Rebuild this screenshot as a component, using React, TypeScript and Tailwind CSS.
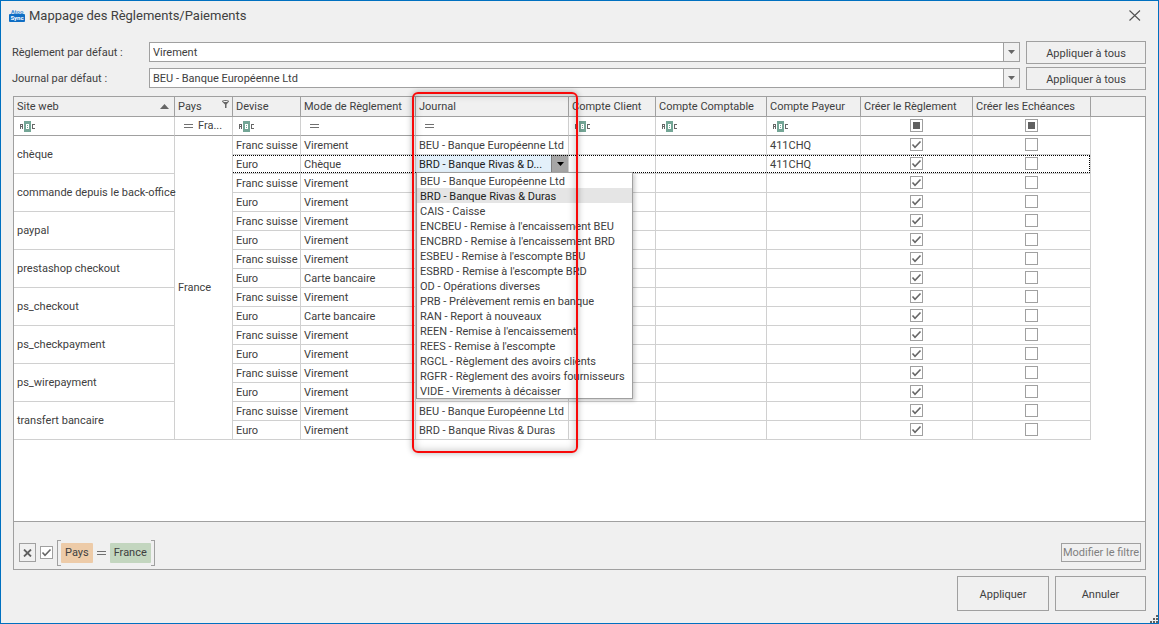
import type { ReactNode } from "react";

type Row = { devise: string; mode: string; journal?: string; payeur?: string };

const JOURNAUX = [
  "BEU - Banque Européenne Ltd",
  "BRD - Banque Rivas & Duras",
  "CAIS - Caisse",
  "ENCBEU - Remise à l'encaissement BEU",
  "ENCBRD - Remise à l'encaissement BRD",
  "ESBEU - Remise à l'escompte BEU",
  "ESBRD - Remise à l'escompte BRD",
  "OD - Opérations diverses",
  "PRB - Prélèvement remis en banque",
  "RAN - Report à nouveaux",
  "REEN - Remise à l'encaissement",
  "REES - Remise à l'escompte",
  "RGCL - Règlement des avoirs clients",
  "RGFR - Règlement des avoirs fournisseurs",
  "VIDE - Virements à décaisser",
];

const FRANC = "Franc suisse";
const EURO = "Euro";

const SITES: { name: string; rows: Row[] }[] = [
  {
    name: "chèque",
    rows: [
      { devise: FRANC, mode: "Virement", journal: JOURNAUX[0], payeur: "411CHQ" },
      { devise: EURO, mode: "Chèque", journal: JOURNAUX[1], payeur: "411CHQ" },
    ],
  },
  {
    name: "commande depuis le back-office",
    rows: [{ devise: FRANC, mode: "Virement" }, { devise: EURO, mode: "Virement" }],
  },
  { name: "paypal", rows: [{ devise: FRANC, mode: "Virement" }, { devise: EURO, mode: "Virement" }] },
  {
    name: "prestashop checkout",
    rows: [{ devise: FRANC, mode: "Virement" }, { devise: EURO, mode: "Carte bancaire" }],
  },
  { name: "ps_checkout", rows: [{ devise: FRANC, mode: "Virement" }, { devise: EURO, mode: "Carte bancaire" }] },
  { name: "ps_checkpayment", rows: [{ devise: FRANC, mode: "Virement" }, { devise: EURO, mode: "Virement" }] },
  { name: "ps_wirepayment", rows: [{ devise: FRANC, mode: "Virement" }, { devise: EURO, mode: "Virement" }] },
  {
    name: "transfert bancaire",
    rows: [
      { devise: FRANC, mode: "Virement", journal: JOURNAUX[0] },
      { devise: EURO, mode: "Virement", journal: JOURNAUX[1] },
    ],
  },
];

const HEAD = "relative h-5 border-r border-b border-[#a0a0a0] bg-[#f0f0f0] px-[3px] text-left font-normal whitespace-nowrap";
const FILTER = "h-[19px] border-r border-b border-r-[#d0d0d0] border-b-[#a0a0a0] px-[6px]";
const CELL = "h-[19px] border-r border-b border-[#d0d0d0] px-[3px] whitespace-nowrap";
const TEXT_CELL = `${CELL} pt-0.5`;
const BUTTON = "border border-[#a0a0a0] bg-[#f0f0f0] hover:bg-[#e4e4e4]";

function AbcIcon() {
  return (
    <svg width="16" height="11" viewBox="0 0 16 11" shapeRendering="crispEdges" aria-hidden>
      <path d="M0 3h3v5h-1v-2h-1v2h-1zM1 4v1h1v-1z" fill="#666" fillRule="evenodd" />
      <rect x="4" width="7" height="11" fill="#74a696" />
      <path d="M6 3h3v5h-3zM7 4v1h1v-1zM7 6v1h1v-1z" fill="#fff" fillRule="evenodd" />
      <path d="M12 3h3v1h-2v3h2v1h-3z" fill="#666" />
    </svg>
  );
}

function EqualsIcon() {
  return (
    <svg width="9" height="4" viewBox="0 0 9 4" shapeRendering="crispEdges" aria-hidden>
      <path d="M0 0.5H9M0 3.5H9" stroke="#707070" />
    </svg>
  );
}

function ArrowDown() {
  return (
    <svg width="7" height="4" viewBox="0 0 7 4" aria-hidden>
      <path d="M0 0H7L3.5 4Z" fill="currentColor" />
    </svg>
  );
}

function Check({ label, checked = false, mixed = false }: { label: string; checked?: boolean; mixed?: boolean }) {
  return (
    <label className="relative mx-auto mb-px block size-[13px]">
      <input
        type="checkbox"
        aria-label={label}
        defaultChecked={checked}
        ref={(el) => {
          if (el) el.indeterminate = mixed;
        }}
        className="peer block size-[13px] appearance-none border border-[#a0a0a0] bg-white"
      />
      <svg
        className="pointer-events-none absolute inset-0 hidden peer-checked:block"
        width="13"
        height="13"
        viewBox="0 0 13 13"
        aria-hidden
      >
        <path d="M2.5 6.5L5 9.3L10.5 3.5" fill="none" stroke="#666" strokeWidth="1.6" />
      </svg>
      <span className="pointer-events-none absolute inset-[3px] hidden bg-[#606060] peer-indeterminate:block" />
    </label>
  );
}

function DefaultRow({ id, label, value, options }: { id: string; label: string; value: string; options: string[] }) {
  return (
    <div className="flex items-start">
      <label htmlFor={id} className="w-[137px] shrink-0 leading-6">
        {label}
      </label>
      <div className="relative mt-px mr-1.5 h-5 flex-1">
        <select
          id={id}
          defaultValue={value}
          className="block h-5 w-full appearance-none border border-[#a0a0a0] bg-white pt-px pr-5 pl-[3px]"
        >
          {options.map((o) => (
            <option key={o}>{o}</option>
          ))}
        </select>
        <span className="pointer-events-none absolute top-px right-px bottom-px flex w-4 items-center justify-center border-l border-[#a0a0a0] bg-[#f0f0f0] text-[#666]">
          <ArrowDown />
        </span>
      </div>
      <button type="button" className={`${BUTTON} h-[23px] w-[120px] pt-0.5`}>
        Appliquer à tous
      </button>
    </div>
  );
}

function JournalEditor() {
  return (
    <td className="relative h-[19px] border-r border-b border-[#d0d0d0] p-0">
      <button
        type="button"
        aria-haspopup="listbox"
        aria-expanded="true"
        className="flex h-[18px] w-full items-stretch bg-[#e3f0fa] text-left text-[#222]"
      >
        <span className="min-w-0 flex-1 truncate pl-[3px] leading-5">BRD - Banque Rivas &amp; D...</span>
        <span className="flex w-[17px] items-center justify-center border-l border-[#808080] bg-[#a6a6a6] text-black">
          <ArrowDown />
        </span>
      </button>
      <ul
        role="listbox"
        aria-label="Journal"
        className="absolute top-[17px] left-0 z-20 w-[217px] border border-[#a0a0a0] bg-white shadow-[2px_2px_4px_rgba(0,0,0,0.2)]"
      >
        {JOURNAUX.map((j, i) => (
          <li
            key={j}
            role="option"
            aria-selected={i === 1}
            className="h-[15px] px-[3px] pt-px leading-4 whitespace-nowrap aria-selected:bg-[#e5e5e5] aria-selected:text-[#222]"
          >
            {j}
          </li>
        ))}
      </ul>
    </td>
  );
}

function Head({ children }: { children?: ReactNode }) {
  return <th className={HEAD}>{children}</th>;
}

function MappingTable() {
  return (
    <table className="w-full table-fixed border-separate border-spacing-0 leading-[14px]">
      <colgroup>
        <col className="w-[161px]" />
        <col className="w-[58px]" />
        <col className="w-[68px]" />
        <col className="w-[115px]" />
        <col className="w-[153px]" />
        <col className="w-[87px]" />
        <col className="w-[111px]" />
        <col className="w-[94px]" />
        <col className="w-[112px]" />
        <col className="w-[118px]" />
        <col />
      </colgroup>
      <thead>
        <tr>
          <Head>
            <span className="flex items-center justify-between pr-[2px]">
              Site web
              <svg width="9" height="5" viewBox="0 0 9 5" aria-hidden>
                <path d="M4.5 0L9 5H0Z" fill="#666" />
              </svg>
            </span>
          </Head>
          <Head>
            <span className="flex items-start justify-between">
              Pays
              <svg width="7" height="8" viewBox="0 0 7 8" aria-hidden>
                <path d="M0 1.5Q0 0 3.5 0T7 1.5L4.5 4.5V8H3V4.5Z" fill="#666" />
                <path d="M1.5 1.5H5.5" stroke="#f0f0f0" />
              </svg>
            </span>
          </Head>
          <Head>Devise</Head>
          <Head>Mode de Règlement</Head>
          <Head>
            Journal
            {/* highlight frame around the whole Journal column */}
            <span className="pointer-events-none absolute -top-[5px] -right-[10px] -left-1 z-30 h-[361px] rounded-md border-2 border-[#f80808] shadow-[0_0_6px_rgba(0,0,0,0.3),inset_0_0_8px_rgba(0,0,0,0.25)]" />
          </Head>
          <Head>Compte Client</Head>
          <Head>Compte Comptable</Head>
          <Head>Compte Payeur</Head>
          <Head>Créer le Règlement</Head>
          <Head>Créer les Echéances</Head>
          <th className="border-b border-[#a0a0a0] bg-[#f0f0f0]" />
        </tr>
        <tr>
          <td className={FILTER}><AbcIcon /></td>
          <td className={FILTER}>
            <span className="flex items-center gap-[5px] pl-[3px]">
              <EqualsIcon />
              Fra...
            </span>
          </td>
          <td className={FILTER}><AbcIcon /></td>
          <td className={FILTER}><span className="block pl-[3px]"><EqualsIcon /></span></td>
          <td className={FILTER}><span className="block pl-[3px]"><EqualsIcon /></span></td>
          <td className={FILTER}><AbcIcon /></td>
          <td className={FILTER}><AbcIcon /></td>
          <td className={FILTER}><AbcIcon /></td>
          <td className={FILTER}><Check label="Filtrer Créer le Règlement" mixed /></td>
          <td className={FILTER}><Check label="Filtrer Créer les Echéances" mixed /></td>
          <td />
        </tr>
      </thead>
      <tbody>
        {SITES.map((site, s) =>
          site.rows.map((row, r) => {
            const focused = s === 0 && r === 1;
            return (
              <tr key={`${site.name}-${row.devise}`} className={focused ? "relative" : undefined}>
                {r === 0 && (
                  <td rowSpan={2} className={CELL}>
                    {site.name}
                  </td>
                )}
                {s === 0 && r === 0 && (
                  <td rowSpan={16} className={CELL}>
                    France
                  </td>
                )}
                <td className={TEXT_CELL}>
                  {row.devise}
                  {focused && (
                    <span className="pointer-events-none absolute top-0 right-[55px] bottom-px left-[219px] z-10 border-y border-r border-dotted border-black" />
                  )}
                </td>
                <td className={TEXT_CELL}>{row.mode}</td>
                {focused ? <JournalEditor /> : <td className={TEXT_CELL}>{row.journal}</td>}
                <td className={CELL} />
                <td className={CELL} />
                <td className={TEXT_CELL}>{row.payeur}</td>
                <td className={CELL}>
                  <Check label={`Créer le règlement, ${site.name}, ${row.devise}`} checked />
                </td>
                <td className={CELL}>
                  <Check label={`Créer les échéances, ${site.name}, ${row.devise}`} />
                </td>
                <td />
              </tr>
            );
          }),
        )}
      </tbody>
    </table>
  );
}

function FilterBar() {
  return (
    <div className="flex h-12 items-center border-t border-[#a0a0a0] bg-[#f0f0f0] pt-[14px] pr-1 pl-[5px]">
      <button type="button" aria-label="Effacer le filtre" className={`${BUTTON} flex h-[19px] w-[17px] items-center justify-center`}>
        <svg width="9" height="8" viewBox="0 0 9 8" aria-hidden>
          <path d="M1 0.5L8 7.5M8 0.5L1 7.5" stroke="#606060" strokeWidth="1.8" />
        </svg>
      </button>
      <span className="mr-1 ml-1">
        <Check label="Filtre actif" checked />
      </span>
      <div className="relative flex h-[26px] items-center px-1">
        <span className="absolute inset-y-0 left-0 w-1 border-y border-l border-[#a0a0a0]" />
        <span className="h-5 rounded-[1px] bg-[#edcba8] px-1 leading-5">Pays</span>
        <span className="mx-1">
          <EqualsIcon />
        </span>
        <span className="h-5 rounded-[1px] bg-[#c3d6bf] px-1 leading-5">France</span>
        <span className="absolute inset-y-0 right-0 w-1 border-y border-r border-[#a0a0a0]" />
      </div>
      <button type="button" className={`${BUTTON} ml-auto h-[19px] w-20 whitespace-nowrap text-[#808080]`}>
        Modifier le filtre
      </button>
    </div>
  );
}

export default function App() {
  return (
    <main className="relative flex min-h-screen flex-col border border-[#0070c0] bg-[#f0f0f0] font-[Roboto,'Liberation_Sans',sans-serif] text-[11px] leading-[14px] text-[#404040]">
      <header className="flex h-7 items-center pr-[17px] pl-2">
        <svg width="16" height="13" viewBox="0 0 16 13" aria-hidden>
          <text x="8" y="4.5" textAnchor="middle" fontSize="6" fontWeight="bold" fill="#3f8fd6">Atoo</text>
          <rect y="5" width="16" height="8" rx="1" fill="#0f6ec4" />
          <text x="8" y="11" textAnchor="middle" fontSize="6" fontWeight="bold" fill="#fff">Sync</text>
        </svg>
        <h1 className="ml-1 pt-0.5 text-[13px]">Mappage des Règlements/Paiements</h1>
        <button type="button" aria-label="Fermer" className="ml-auto">
          <svg width="12" height="11" viewBox="0 0 12 11" aria-hidden>
            <path d="M0.5 0.5L11 10.5M11 0.5L0.5 10.5" stroke="#505050" strokeWidth="1.1" />
          </svg>
        </button>
      </header>

      <section className="flex flex-col gap-0.5 pt-3 pr-3 pl-[11px]">
        <DefaultRow id="reglement" label="Règlement par défaut :" value="Virement" options={["Virement", "Chèque", "Carte bancaire"]} />
        <DefaultRow id="journal" label="Journal par défaut :" value={JOURNAUX[0]} options={JOURNAUX} />
      </section>

      <section className="mx-3 mt-[5px] flex flex-1 flex-col border border-[#a0a0a0] bg-white">
        <div className="flex-1">
          <MappingTable />
        </div>
        <FilterBar />
      </section>

      <footer className="flex justify-end gap-1.5 px-3 pt-1.5 pb-3">
        <button type="button" className={`${BUTTON} h-[35px] w-[92px] pt-0.5`}>
          Appliquer
        </button>
        <button type="button" className={`${BUTTON} h-[35px] w-[91px] pt-0.5`}>
          Annuler
        </button>
      </footer>
      <svg className="absolute right-0 bottom-0" width="8" height="8" viewBox="0 0 8 8" shapeRendering="crispEdges" aria-hidden>
        <path d="M6 0h2v2h-2zM3 3h2v2h-2zM6 3h2v2h-2zM0 6h2v2h-2zM3 6h2v2h-2zM6 6h2v2h-2z" fill="#606060" />
      </svg>
    </main>
  );
}
